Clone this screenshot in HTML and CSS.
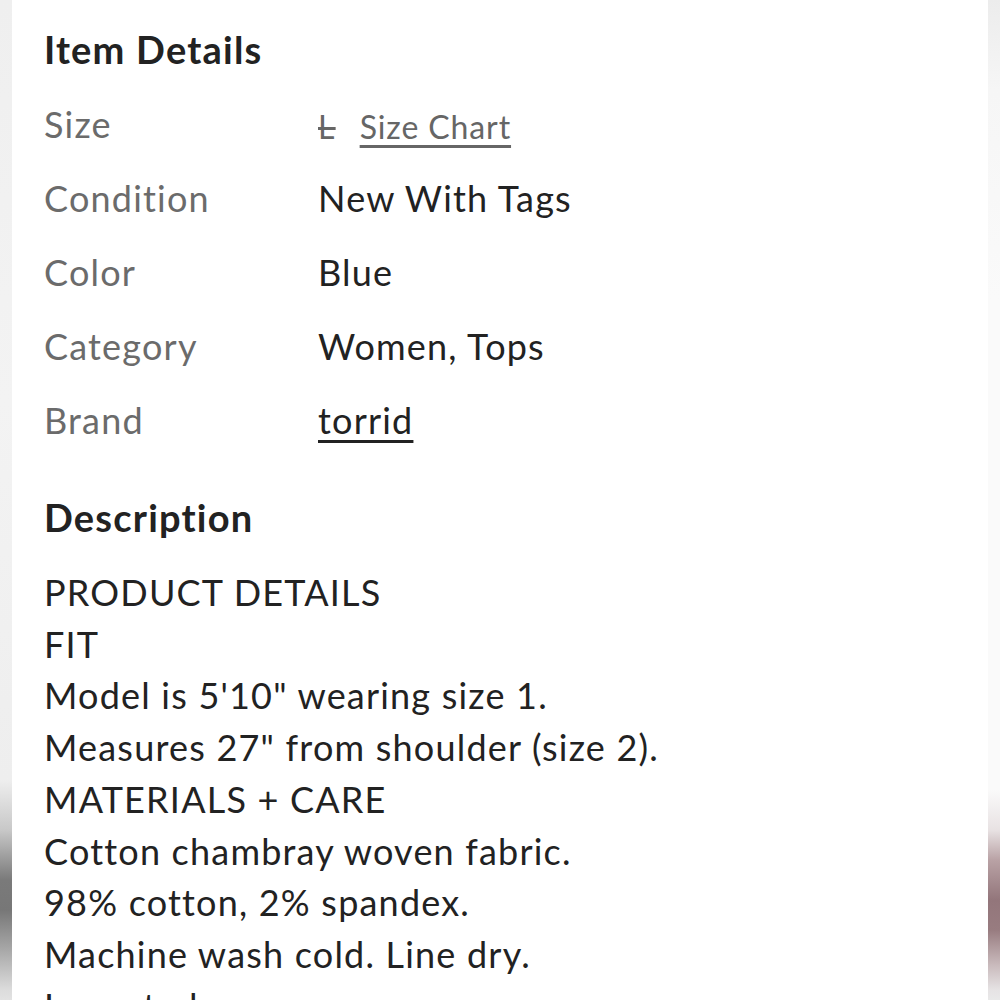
FILE: index.html
```html
<!DOCTYPE html>
<html>
<head>
<meta charset="utf-8">
<link rel="stylesheet" href="styles.css">
</head>
<body>
<div class="page">
  <div class="edge edge-left"></div>
  <main class="panel">
    <h2 class="heading">Item Details</h2>
    <dl class="details">
      <div class="row">
        <dt>Size</dt>
        <dd><span class="size-old">L</span><a class="size-chart" href="#">Size Chart</a></dd>
      </div>
      <div class="row">
        <dt>Condition</dt>
        <dd>New With Tags</dd>
      </div>
      <div class="row">
        <dt>Color</dt>
        <dd>Blue</dd>
      </div>
      <div class="row">
        <dt>Category</dt>
        <dd>Women, Tops</dd>
      </div>
      <div class="row">
        <dt>Brand</dt>
        <dd><a class="brand" href="#">torrid</a></dd>
      </div>
    </dl>
    <h2 class="heading heading-desc">Description</h2>
    <div class="description">
      <p>PRODUCT DETAILS</p>
      <p>FIT</p>
      <p>Model is 5'10" wearing size 1.</p>
      <p>Measures 27" from shoulder (size 2).</p>
      <p>MATERIALS + CARE</p>
      <p>Cotton chambray woven fabric.</p>
      <p>98% cotton, 2% spandex.</p>
      <p>Machine wash cold. Line dry.</p>
      <p>Imported.</p>
    </div>
  </main>
  <div class="edge edge-right"></div>
</div>
</body>
</html>
```

FILE: styles.css
```css
html, body {
  margin: 0;
  padding: 0;
  background: #fff;
  overflow: hidden;
}
.page {
  display: flex;
  width: 1000px;
  height: 1000px;
  overflow: hidden;
}
.edge {
  width: 12px;
  flex: none;
}
.edge-left {
  background: linear-gradient(to bottom,
    #efefef 0px, #f3f3f3 400px, #eeeeee 780px, #c8c8c8 830px,
    #7a7a7a 880px, #777 910px, #a8a8a8 950px, #dcdcdc 990px, #e2e2e2 1000px);
}
.edge-right {
  background: linear-gradient(to bottom,
    #ececec 0px, #f6f6f6 90px, #fafafa 300px, #fafafa 790px, #e8e2e3 830px,
    #b9a2a5 860px, #93767b 900px, #987c80 930px, #c9babc 965px, #e6e3e4 990px, #e9e9e9 1000px);
}
.panel {
  flex: 1;
  background: #fff;
  padding: 0 0 0 32px;
  font-family: "Lato", "Noto Sans", sans-serif;
  color: #222;
  letter-spacing: 1.2px;
}
.heading {
  margin: 0;
  font-size: 38px;
  font-weight: 700;
  color: #222;
  line-height: 44px;
  padding-top: 27px;
  height: 52px;
}
.details {
  margin: 0;
  padding-top: 8px;
}
.row {
  display: flex;
  align-items: center;
  height: 74px;
  font-size: 36px;
}
.row dt {
  width: 274px;
  color: #6b6b6b;
}
.row dd {
  margin: 0;
  color: #222;
  display: flex;
  align-items: baseline;
}
.size-old {
  color: #666;
  text-decoration: line-through;
  font-size: 32px;
  margin-right: 24px;
  position: relative;
  top: 2px;
}
.size-chart {
  color: #666;
  font-size: 32px;
  letter-spacing: 0.9px;
  text-decoration: underline;
  text-underline-offset: 6px;
  position: relative;
  top: 2px;
}
.brand {
  color: #222;
  text-decoration: underline;
  text-underline-offset: 6px;
}
.heading-desc {
  padding-top: 38px;
  height: 52px;
}
.description {
  padding-top: 20px;
  font-size: 36px;
  line-height: 51.7px;
  color: #222;
}
.description p {
  margin: 0;
}
```
